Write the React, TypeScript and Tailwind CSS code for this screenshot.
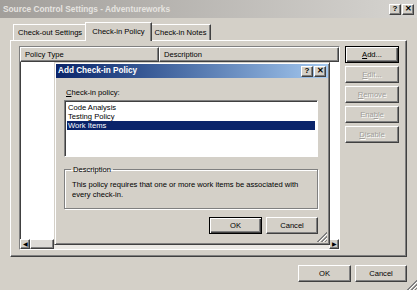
import type { ReactNode } from "react";

const raised =
  "border border-t-white border-l-white border-r-[#404040] border-b-[#404040] shadow-[inset_-1px_-1px_0_#808080]";
const sunken =
  "border border-t-[#808080] border-l-[#808080] border-r-white border-b-white shadow-[inset_1px_1px_0_#404040]";

const CapBtn = ({ children }: { children: ReactNode }) => (
  <div className={`w-[12px] h-[11px] bg-[#d4d0c8] flex items-center justify-center font-bold text-[8px] text-black ${raised}`}>
    {children}
  </div>
);

const Btn = ({
  children,
  w,
  def,
  disabled,
}: {
  children: ReactNode;
  w: string;
  def?: boolean;
  disabled?: boolean;
}) => (
  <div
    className={`${w} h-[17px] flex items-center justify-center bg-[#d4d0c8] ${
      def
        ? "border border-black shadow-[inset_1px_1px_0_white,inset_-1px_-1px_0_#404040,inset_-2px_-2px_0_#808080]"
        : raised
    } ${disabled ? "text-[#a09e9a] [text-shadow:1px_1px_0_white]" : "text-black"}`}
  >
    {children}
  </div>
);

const Grip = () => (
  <svg width="11" height="11" viewBox="0 0 11 11" className="block">
    <path d="M11 1L1 11M11 5L5 11M11 9L9 11" stroke="#808080" strokeWidth="1" />
    <path d="M11 2L2 11M11 6L6 11" stroke="#808080" strokeWidth="1" />
    <path d="M11 3L3 11M11 7L7 11" stroke="white" strokeWidth="1" />
  </svg>
);

const Tab = ({ label, active }: { label: string; active?: boolean }) =>
  active ? (
    <div className="relative z-10 -mx-[2px] -mb-[1px] h-[19px] px-[6px] flex items-center bg-[#d4d0c8] border-t border-l border-r border-t-white border-l-white border-r-[#404040] shadow-[inset_-1px_0_0_#808080]">
      {label}
    </div>
  ) : (
    <div className="h-[16px] px-[4px] flex items-center border-t border-l border-r border-t-white border-l-white border-r-[#404040] shadow-[inset_-1px_0_0_#808080]">
      {label}
    </div>
  );

export default function App() {
  return (
    <div className="relative w-[417px] h-[290px] overflow-hidden bg-[#d4d0c8] text-black font-['Liberation_Sans',Arial,sans-serif] text-[7.6px] leading-none select-none">
      {/* outer title bar */}
      <div className="h-[18px] flex items-center justify-between pl-[3px] pr-[3px] bg-linear-to-r from-[#a29f9b] to-[#d6d4d0]">
        <span className="font-bold text-[8.3px] text-[#e6e4e0]">
          Source Control Settings - Adventureworks
        </span>
        <div className="flex gap-[1px]">
          <CapBtn>?</CapBtn>
          <CapBtn>✕</CapBtn>
        </div>
      </div>

      <div className="px-[10px] pt-[4px]">
        {/* tabs */}
        <div className="flex items-end h-[18px] pl-[3px]">
          <Tab label="Check-out Settings" />
          <Tab label="Check-in Policy" active />
          <Tab label="Check-in Notes" />
        </div>

        {/* tab panel */}
        <div className={`h-[217px] flex gap-[5px] pt-[5px] pl-[8px] pr-[6px] ${raised}`}>
          <div className={`w-[321px] h-[204px] flex flex-col bg-white ${sunken}`}>
            <div className="flex h-[15px] bg-[#d4d0c8]">
              <div className={`w-[139px] flex items-center pl-[4px] ${raised}`}>Policy Type</div>
              <div className={`flex-1 flex items-center pl-[4px] ${raised}`}>Description</div>
            </div>
            <div className="flex-1" />
            <div className="h-[10px] flex bg-[#ebe9e5]">
              <div className={`w-[10px] flex items-center justify-center bg-[#d4d0c8] text-[6px] ${raised}`}>◀</div>
              <div className={`w-[24px] bg-[#dcdad6] ${raised}`} />
              <div className="flex-1" />
              <div className={`w-[10px] flex items-center justify-center bg-[#d4d0c8] text-[6px] ${raised}`}>▶</div>
            </div>
          </div>

          <div className="flex flex-col gap-[3px] w-[54px]">
            <Btn w="w-[54px]" def>
              <span><u>A</u>dd...</span>
            </Btn>
            <Btn w="w-[54px]" disabled>
              <span><u>E</u>dit...</span>
            </Btn>
            <Btn w="w-[54px]" disabled>
              <span><u>R</u>emove</span>
            </Btn>
            <Btn w="w-[54px]" disabled>
              <span>Ena<u>b</u>le</span>
            </Btn>
            <Btn w="w-[54px]" disabled>
              <span><u>D</u>isable</span>
            </Btn>
          </div>
        </div>

        {/* dialog buttons */}
        <div className="flex justify-end gap-[4px] mt-[8px]">
          <Btn w="w-[53px]">OK</Btn>
          <Btn w="w-[52px]">Cancel</Btn>
        </div>
      </div>

      <div className="absolute right-0 bottom-0">
        <Grip />
      </div>

      {/* child window: Add Check-in Policy */}
      <div className="absolute left-[54px] top-[62px] w-[276px] h-[183px] flex flex-col p-[1px] bg-[#d4d0c8] border border-t-[#d4d0c8] border-l-[#d4d0c8] border-r-[#404040] border-b-[#404040] shadow-[inset_1px_1px_0_white,inset_-1px_-1px_0_#808080]">
        <div className="h-[14px] flex items-center justify-between pl-[2px] pr-[2px] bg-linear-to-r from-[#0a246a] to-[#a6caf0]">
          <span className="font-bold text-[8.2px] text-white">Add Check-in Policy</span>
          <div className="flex gap-[1px]">
            <CapBtn>?</CapBtn>
            <CapBtn>✕</CapBtn>
          </div>
        </div>

        <div className="flex flex-col pl-[8px] pr-[10px] pt-[11px]">
          <div className="h-[9px] mb-[2px] pl-[2px]">
            <u>C</u>heck-in policy:
          </div>
          <div className={`h-[57px] bg-white p-[2px] ${sunken}`}>
            <div className="h-[9px] flex items-center pl-[1px]">Code Analysis</div>
            <div className="h-[9px] flex items-center pl-[1px]">Testing Policy</div>
            <div className="h-[9px] flex items-center pl-[1px] bg-[#0a246a] text-white">Work Items</div>
          </div>

          <fieldset className="mt-[9px] h-[43px] px-[7px] border border-[#808080] shadow-[1px_1px_0_white,inset_1px_1px_0_white]">
            <legend className="px-[2px] ml-[-1px] text-[7.6px]">Description</legend>
            <p className="mt-[6px] leading-[10px]">
              This policy requires that one or more work items be associated with every check-in.
            </p>
          </fieldset>

          <div className="flex justify-end gap-[4px] mt-[8px]">
            <Btn w="w-[53px]" def>OK</Btn>
            <Btn w="w-[52px]">Cancel</Btn>
          </div>
        </div>

        <div className="absolute right-[2px] bottom-[2px]">
          <Grip />
        </div>
      </div>
    </div>
  );
}
